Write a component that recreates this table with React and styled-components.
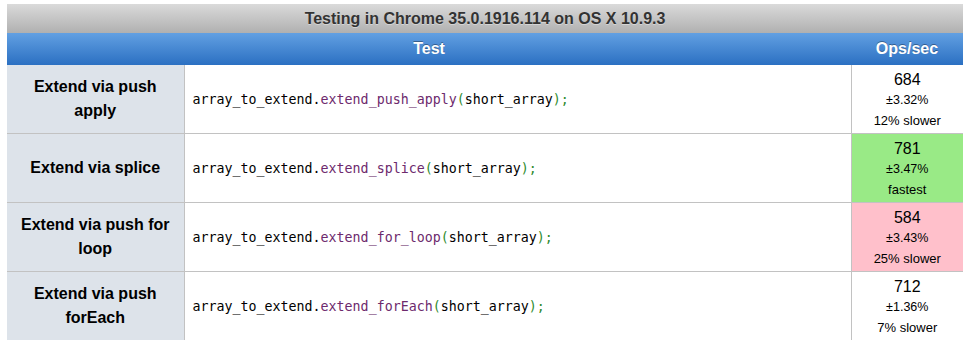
import React from "react";
import styled, { createGlobalStyle } from "styled-components";

const GlobalStyle = createGlobalStyle`
  body {
    margin: 0;
    background: #fff;
    font-family: "Liberation Sans", Arial, sans-serif;
  }
`;

const Page = styled.div`
  padding: 4px 10px 0 7px;
`;

const Table = styled.table`
  width: 956px;
  border-collapse: collapse;
  table-layout: fixed;
`;

const Caption = styled.caption`
  height: 29px;
  line-height: 29px;
  font-size: 16px;
  font-weight: bold;
  color: #333;
  background: linear-gradient(#dadada, #b0b0b0);
  text-shadow: 0 1px 0 rgba(255, 255, 255, 0.4);
`;

const HeadCell = styled.th`
  height: 32px;
  padding: 0;
  font-size: 16px;
  font-weight: bold;
  color: #fff;
  text-shadow: 0 -1px 0 rgba(0, 0, 0, 0.35);
  background: linear-gradient(#62a0e2, #2b70c2);
  text-align: center;
`;

const Row = styled.tr`
  border-bottom: 1px solid #c2c2c2;
  &:last-child {
    border-bottom: none;
  }
`;

const TitleCell = styled.th`
  background: #dde3ea;
  border-right: 1px solid #c2c2c2;
  font-size: 16px;
  font-weight: bold;
  line-height: 24px;
  color: #000;
  text-align: center;
  padding: 8px 8px;
`;

const CodeCell = styled.td`
  padding: 0 8px;
  font-family: "DejaVu Sans Mono", "Liberation Mono", monospace;
  font-size: 13.3px;
  color: #000;
  border-right: 1px solid #c2c2c2;
  white-space: nowrap;
`;

const Method = styled.span`
  color: #6d2a6d;
`;

const Paren = styled.span`
  color: #2e8b2e;
`;

const OpsCell = styled.td`
  background: ${(p) =>
    p.$state === "fastest" ? "#99ea86" : p.$state === "slowest" ? "#ffc0cb" : "#fff"};
  text-align: center;
  padding: 5px 0 2px;
  color: #000;
  height: 61px;
  vertical-align: top;
`;

const Ops = styled.div`
  font-size: 16px;
  line-height: 20px;
`;

const Rme = styled.div`
  font-size: 12.5px;
  line-height: 21px;
`;

const Result = styled.div`
  font-size: 13px;
  line-height: 19px;
`;

const tests = [
  { title: "Extend via push apply", method: "extend_push_apply", ops: "684", rme: "3.32%", result: "12% slower" },
  { title: "Extend via splice", method: "extend_splice", ops: "781", rme: "3.47%", result: "fastest", state: "fastest" },
  { title: "Extend via push for loop", method: "extend_for_loop", ops: "584", rme: "3.43%", result: "25% slower", state: "slowest" },
  { title: "Extend via push forEach", method: "extend_forEach", ops: "712", rme: "1.36%", result: "7% slower" },
];

export default function App() {
  return (
    <Page>
      <GlobalStyle />
      <Table>
        <Caption>Testing in Chrome 35.0.1916.114 on OS X 10.9.3</Caption>
        <colgroup>
          <col style={{ width: 177 }} />
          <col style={{ width: 667 }} />
          <col style={{ width: 112 }} />
        </colgroup>
        <thead>
          <tr>
            <HeadCell colSpan={2}>Test</HeadCell>
            <HeadCell>Ops/sec</HeadCell>
          </tr>
        </thead>
        <tbody>
          {tests.map((t) => (
            <Row key={t.method}>
              <TitleCell>{t.title}</TitleCell>
              <CodeCell>
                array_to_extend.<Method>{t.method}</Method>
                <Paren>(</Paren>short_array<Paren>);</Paren>
              </CodeCell>
              <OpsCell $state={t.state}>
                <Ops>{t.ops}</Ops>
                <Rme>±{t.rme}</Rme>
                <Result>{t.result}</Result>
              </OpsCell>
            </Row>
          ))}
        </tbody>
      </Table>
    </Page>
  );
}
